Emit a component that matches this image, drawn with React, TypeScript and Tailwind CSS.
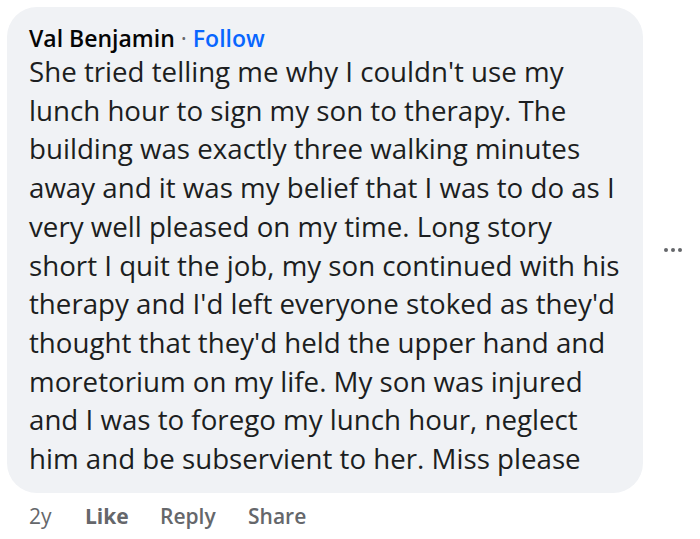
import React from "react";

const lines = [
  "She tried telling me why I couldn't use my",
  "lunch hour to sign my son to therapy. The",
  "building was exactly three walking minutes",
  "away and it was my belief that I was to do as I",
  "very well pleased on my time. Long story",
  "short I quit the job, my son continued with his",
  "therapy and I'd left everyone stoked as they'd",
  "thought that they'd held the upper hand and",
  "moretorium on my life. My son was injured",
  "and I was to forego my lunch hour, neglect",
  "him and be subservient to her. Miss please",
];

export default function App() {
  return (
    <div
      className="w-[700px] h-[539px] bg-white overflow-hidden"
      style={{ fontFamily: '"Open Sans", "Noto Sans", sans-serif' }}
    >
      <div className="flex items-center pt-[7px] pl-[7px]">
        <div className="w-[636px] rounded-[30px] bg-[#f0f2f5] pl-[22px] pt-[16px] pb-[15px]">
          <div className="text-[23px] leading-[30px] text-[#050505] flex items-center">
            <span className="font-semibold">Val Benjamin</span>
            <span className="text-[#65676b] mx-[6px]">·</span>
            <span className="font-semibold text-[#0866ff]">Follow</span>
          </div>
          <div className="text-[27.7px] leading-[38.7px] text-[#1c1e21] whitespace-nowrap -mt-[1px]">
            {lines.map((l, i) => (
              <div key={i}>{l}</div>
            ))}
          </div>
        </div>
        <div className="flex-1 flex justify-center gap-[3px] pl-[2px]">
          <span className="w-[4px] h-[4px] rounded-full bg-[#65676b]" />
          <span className="w-[4px] h-[4px] rounded-full bg-[#65676b]" />
          <span className="w-[4px] h-[4px] rounded-full bg-[#65676b]" />
        </div>
      </div>
      <div className="flex items-center pl-[29px] pt-[8px] text-[21px] leading-[30px] text-[#65676b]">
        <span className="w-[56px]">2y</span>
        <span className="font-bold w-[75px]">Like</span>
        <span className="font-semibold w-[88px]">Reply</span>
        <span className="font-semibold">Share</span>
      </div>
    </div>
  );
}
